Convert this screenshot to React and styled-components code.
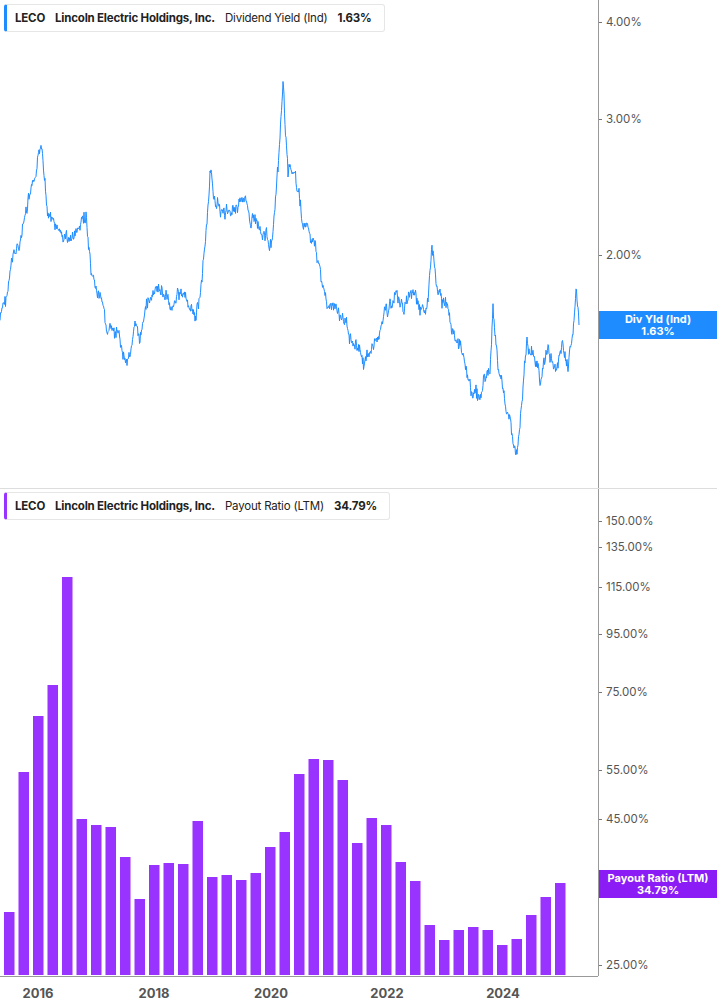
import React from "react";
import styled, { createGlobalStyle } from "styled-components";

const G = createGlobalStyle`
  body{margin:0;background:#fff;font-family:Inter,"Liberation Sans",sans-serif;}
`;
const Page = styled.div`width:717px;height:1005px;display:flex;flex-direction:column;`;
const Panel = styled.div`display:flex;height:${p=>p.h}px;border-bottom:${p=>p.line?"1px solid #ddd":"none"};`;
const Plot = styled.div`position:relative;width:598px;height:100%;border-right:1px solid #999;`;
const Axis = styled.div`position:relative;flex:1;`;
const Tick = styled.div`position:absolute;left:0;transform:translateY(-50%);display:flex;align-items:center;gap:4px;font-size:11.5px;color:#555;
  &::before{content:"";width:3px;height:1px;background:#777;}`;
const Legend = styled.div`position:absolute;left:4px;top:${p=>p.t}px;height:26px;display:flex;align-items:center;gap:10px;
  padding:0 12px 0 8px;border:1px solid #e6e6e6;border-left:3px solid ${p=>p.c};border-radius:3px;background:#fff;font-size:11.5px;letter-spacing:-0.2px;color:#222;`;
const B = styled.span`font-weight:700;`;
const Tag = styled.div`position:absolute;left:0;right:0;top:${p=>p.t}px;height:28px;background:${p=>p.c};color:#fff;
  font-size:11px;font-weight:700;display:flex;flex-direction:column;align-items:center;justify-content:center;line-height:12px;`;
const XAxis = styled.div`position:relative;width:598px;height:29px;border-top:1px solid #999;font-size:13px;font-weight:700;color:#555;`;
const Year = styled.span`position:absolute;top:8px;transform:translateX(-50%);`;

const keys=[[0,320],[6,300],[12,265],[20,240],[30,200],[36,180],[42,148],[48,210],[58,235],[70,240],[80,230],[86,215],[92,290],[100,300],[106,325],[120,345],[126,360],[135,330],[140,345],[146,300],[155,295],[162,290],[170,305],[178,290],[188,305],[196,320],[202,280],[210,180],[218,205],[228,215],[240,195],[250,215],[262,225],[272,245],[278,180],[283,90],[288,170],[295,175],[302,220],[312,240],[320,270],[326,300],[338,315],[350,330],[358,345],[365,365],[375,340],[385,315],[395,298],[405,305],[414,290],[420,320],[428,300],[432,255],[438,300],[446,305],[456,340],[464,350],[470,385],[478,400],[484,380],[490,370],[493,310],[498,370],[504,395],[510,420],[514,450],[517,455],[522,405],[527,345],[534,350],[540,385],[548,345],[556,375],[562,340],[568,370],[573,330],[576,293],[579,325]];
let s=7;const rnd=()=>{s=(s*9301+49297)%233280;return s/233280-0.5;};
const pts=[];let drift=0;
for(let i=0;i<keys.length-1;i++){const [x0,y0]=keys[i],[x1,y1]=keys[i+1];for(let x=x0;x<x1;x+=0.5){const t=(x-x0)/(x1-x0);drift=drift*0.85+rnd()*9;pts.push([x,y0+(y1-y0)*t+drift+rnd()*8]);}}
pts.push(keys[keys.length-1]);
const linePath="M"+pts.map(p=>p[0].toFixed(1)+","+p[1].toFixed(1)).join("L");

const tops=[912,772,716,685,577,819,825,827,857,899,865,863,864,821,877,875,880,873,847,832,774,759,760,780,843,818,825,862,881,925,940,930,927,930,945,939,915,897,883];

export default function App(){
  return <Page><G/>
    <Panel h={488} line>
      <Plot>
        <svg width="598" height="488"><path d={linePath} fill="none" stroke="#1e8cff" strokeWidth="1"/></svg>
        <Legend t={4} c="#1e8cff"><B>LECO</B><B>Lincoln Electric Holdings, Inc.</B><span>Dividend Yield (Ind)</span><B>1.63%</B></Legend>
      </Plot>
      <Axis>
        <Tick style={{top:22}}>4.00%</Tick><Tick style={{top:119}}>3.00%</Tick><Tick style={{top:255}}>2.00%</Tick>
        <Tag t={311} c="#1e8cff"><span>Div Yld (Ind)</span><span>1.63%</span></Tag>
      </Axis>
    </Panel>
    <Panel h={487}>
      <Plot>
        <svg width="598" height="487">{tops.map((t,i)=><rect key={i} x={4+i*14.5} y={t-489} width="10.5" height={975-t} fill="#9933ff"/>)}</svg>
        <Legend t={3} c="#9933ff"><B>LECO</B><B>Lincoln Electric Holdings, Inc.</B><span>Payout Ratio (LTM)</span><B>34.79%</B></Legend>
      </Plot>
      <Axis>
        {[[521,"150.00%"],[547,"135.00%"],[587,"115.00%"],[634,"95.00%"],[692,"75.00%"],[770,"55.00%"],[819,"45.00%"],[965,"25.00%"]].map(([y,l])=><Tick key={l} style={{top:y-489}}>{l}</Tick>)}
        <Tag t={381} c="#8b1cf5"><span>Payout Ratio (LTM)</span><span>34.79%</span></Tag>
      </Axis>
    </Panel>
    <XAxis>{[[38,2016],[154,2018],[271,2020],[387,2022],[503,2024]].map(([x,y])=><Year key={y} style={{left:x}}>{y}</Year>)}</XAxis>
  </Page>;
}
